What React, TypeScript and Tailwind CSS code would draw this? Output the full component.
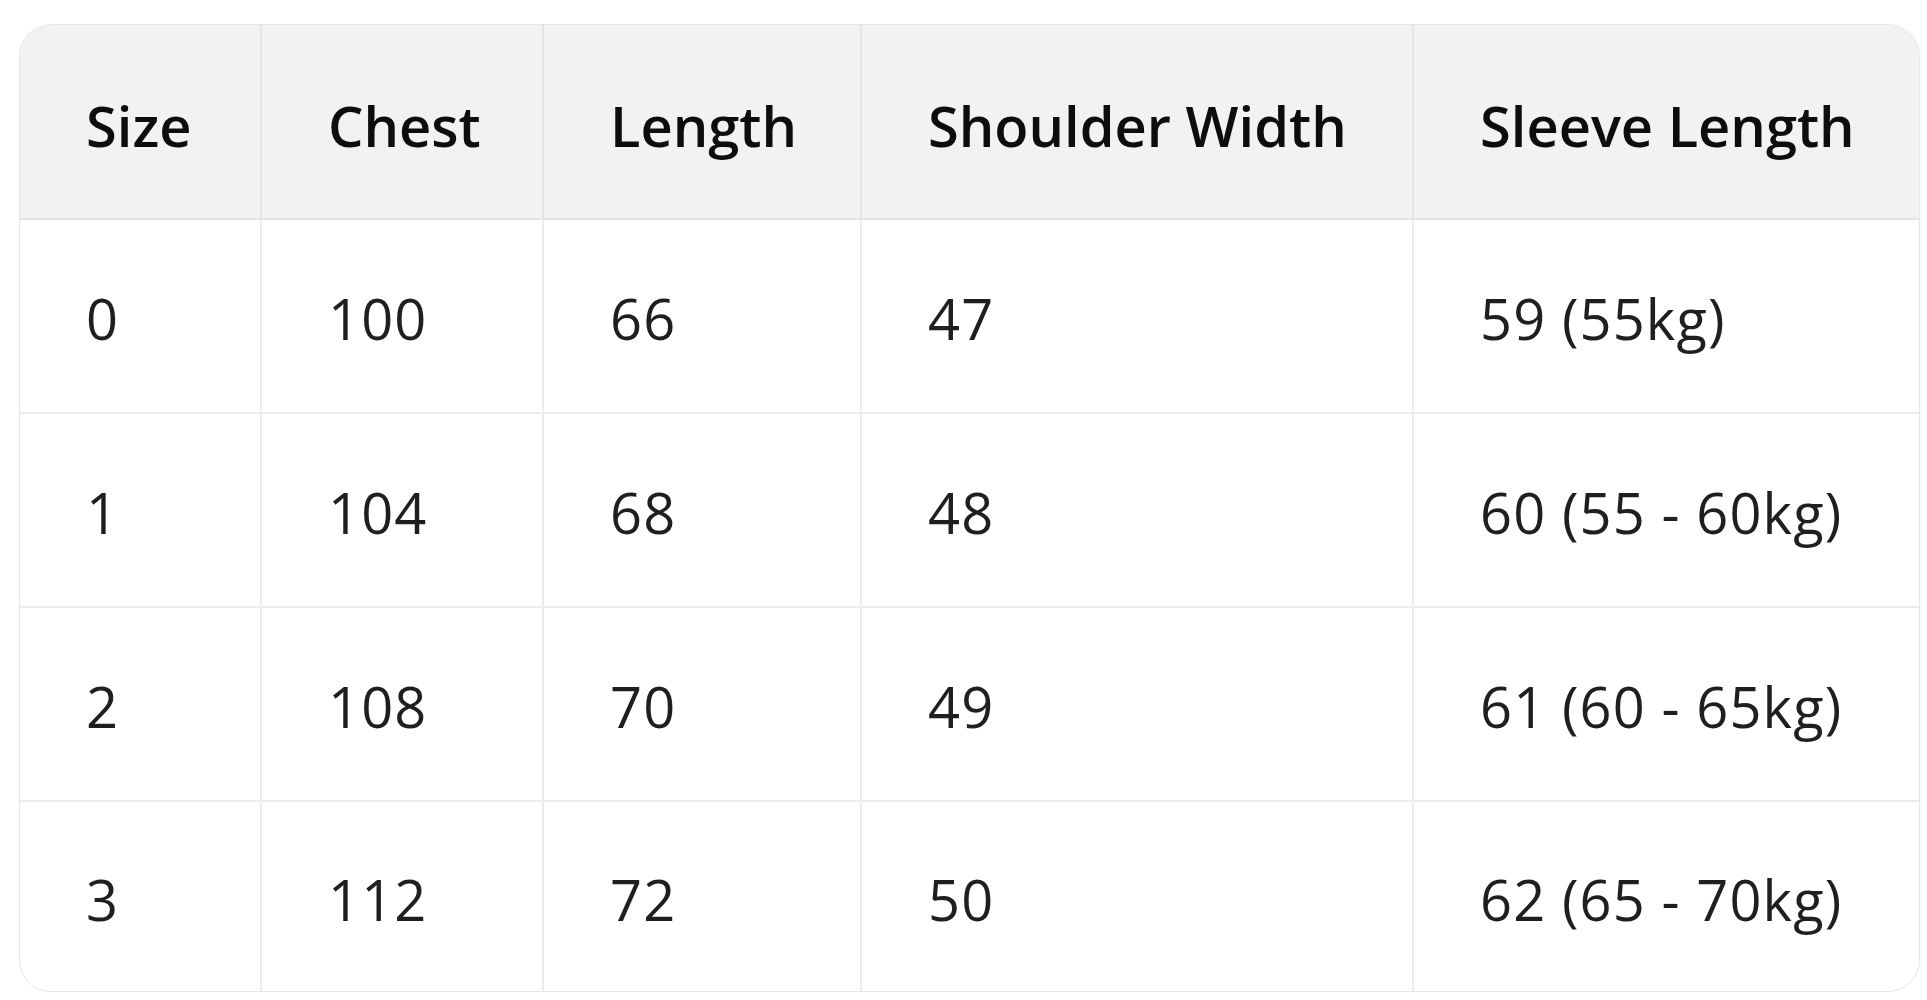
const HEADERS = ['Size', 'Chest', 'Length', 'Shoulder Width', 'Sleeve Length']

const ROWS = [
  ['0', '100', '66', '47', '59 (55kg)'],
  ['1', '104', '68', '48', '60 (55 - 60kg)'],
  ['2', '108', '70', '49', '61 (60 - 65kg)'],
  ['3', '112', '72', '50', '62 (65 - 70kg)'],
]

const COL_WIDTHS = ['w-[241px]', 'w-[282px]', 'w-[318px]', 'w-[552px]', 'w-auto']

export default function App() {
  return (
    <div className="min-h-screen bg-white pt-[24px] pl-[19px] font-['Open_Sans','Noto_Sans',sans-serif]">
      <div className="w-[1901px] rounded-[32px] border border-[#e6e6e6] overflow-hidden">
        <table className="w-full table-fixed border-collapse">
          <colgroup>
            {COL_WIDTHS.map((w, i) => (
              <col key={i} className={w} />
            ))}
          </colgroup>
          <thead>
            <tr className="h-[194px] bg-[#f2f2f2]">
              {HEADERS.map((h, i) => (
                <th
                  key={h}
                  className={`pl-[66px] pt-[6px] text-left align-middle text-[56px] font-semibold text-[#0d0d0d] border-b-2 border-[#e3e3e3] ${
                    i < HEADERS.length - 1 ? 'border-r-2' : ''
                  }`}
                >
                  {h}
                </th>
              ))}
            </tr>
          </thead>
          <tbody>
            {ROWS.map((row, r) => (
              <tr key={r} className={r === ROWS.length - 1 ? 'h-[190px]' : 'h-[194px]'}>
                {row.map((cell, i) => (
                  <td
                    key={i}
                    className={`pl-[66px] pt-[4px] text-left align-middle text-[56px] tracking-[0.02em] text-[#1f1f1f] border-[#ececec] ${
                      i < row.length - 1 ? 'border-r-2' : ''
                    } ${r < ROWS.length - 1 ? 'border-b-2' : ''}`}
                  >
                    {cell}
                  </td>
                ))}
              </tr>
            ))}
          </tbody>
        </table>
      </div>
    </div>
  )
}
